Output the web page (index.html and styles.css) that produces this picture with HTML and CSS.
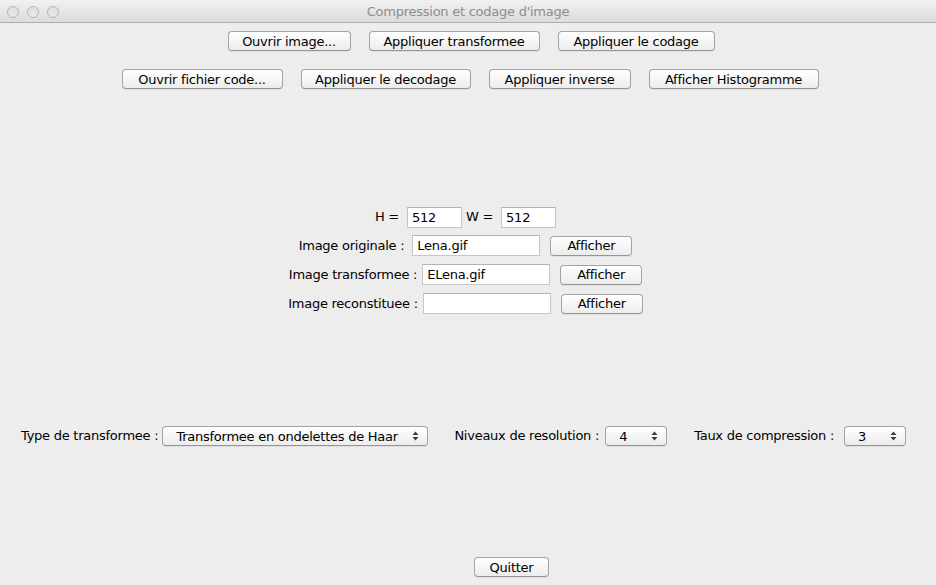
FILE: index.html
```html
<!DOCTYPE html>
<html lang="fr">
<head>
<meta charset="utf-8">
<title>Compression et codage d'image</title>
<link rel="stylesheet" href="styles.css">
</head>
<body>
<div class="window">
  <div class="titlebar">
    <div class="lights"><span class="light"></span><span class="light"></span><span class="light"></span></div>
    <div class="title">Compression et codage d'image</div>
    <div></div>
  </div>
  <div class="content">
    <div class="toolbar toolbar-one">
      <button class="btn w-ouvrir">Ouvrir image...</button>
      <button class="btn w-transf">Appliquer transformee</button>
      <button class="btn w-codage">Appliquer le codage</button>
    </div>
    <div class="toolbar toolbar-two">
      <button class="btn w-fichier">Ouvrir fichier code...</button>
      <button class="btn w-decodage">Appliquer le decodage</button>
      <button class="btn w-inverse">Appliquer inverse</button>
      <button class="btn w-histo">Afficher Histogramme</button>
    </div>

    <div class="center">
      <div class="line dims">
        <span class="lbl">H =</span>
        <span class="field small">512</span>
        <span class="lbl w-lbl">W =</span>
        <span class="field small w-field">512</span>
      </div>
      <div class="line">
        <span class="lbl">Image originale :</span>
        <span class="field wide gap-a">Lena.gif</span>
        <button class="btn afficher">Afficher</button>
      </div>
      <div class="line">
        <span class="lbl">Image transformee :</span>
        <span class="field wide gap-b">ELena.gif</span>
        <button class="btn afficher">Afficher</button>
      </div>
      <div class="line">
        <span class="lbl">Image reconstituee :</span>
        <span class="field wide gap-b"></span>
        <button class="btn afficher">Afficher</button>
      </div>
    </div>

    <div class="options">
      <span class="lbl">Type de transformee :</span>
      <div class="popup popup-type">
        <span class="popup-value">Transformee en ondelettes de Haar</span>
        <svg class="arrows" width="7" height="10" viewBox="0 0 7 10"><path d="M3.5 0.5 L6.5 4 L0.5 4 Z M0.5 6 L6.5 6 L3.5 9.5 Z" fill="#3a3a3a"/></svg>
      </div>
      <span class="lbl opt-gap niveaux">Niveaux de resolution :</span>
      <div class="popup popup-small">
        <span class="popup-value">4</span>
        <svg class="arrows" width="7" height="10" viewBox="0 0 7 10"><path d="M3.5 0.5 L6.5 4 L0.5 4 Z M0.5 6 L6.5 6 L3.5 9.5 Z" fill="#3a3a3a"/></svg>
      </div>
      <span class="lbl opt-gap">Taux de compression :</span>
      <div class="popup popup-small popup-taux">
        <span class="popup-value">3</span>
        <svg class="arrows" width="7" height="10" viewBox="0 0 7 10"><path d="M3.5 0.5 L6.5 4 L0.5 4 Z M0.5 6 L6.5 6 L3.5 9.5 Z" fill="#3a3a3a"/></svg>
      </div>
    </div>

    <div class="footer">
      <button class="btn w-quitter">Quitter</button>
    </div>
  </div>
</div>
</body>
</html>
```
FILE: styles.css
```css
* { box-sizing: border-box; }

html, body {
  margin: 0;
  padding: 0;
  background: #ededed;
}

body {
  font-family: "DejaVu Sans", "Noto Sans", sans-serif;
  font-size: 13px;
  letter-spacing: -0.25px;
  color: #000;
}

.window {
  width: 936px;
  height: 585px;
  display: flex;
  flex-direction: column;
  background: #ededed;
}

.titlebar {
  height: 23px;
  display: grid;
  grid-template-columns: 1fr auto 1fr;
  align-items: center;
  background: linear-gradient(#f1f1f1, #e4e4e4 60%, #dcdcdc);
  border-bottom: 1px solid #aeaeae;
}

.lights {
  display: flex;
  gap: 8px;
  padding-left: 7px;
  padding-top: 1px;
}

.light {
  width: 12px;
  height: 12px;
  border-radius: 50%;
  border: 1px solid #b4b4b4;
  background: linear-gradient(#dedede, #eaeaea);
}

.title {
  color: #8d8d8d;
  font-size: 13px;
  padding-top: 1px;
}

.content {
  display: flex;
  flex-direction: column;
}

.toolbar {
  display: flex;
  justify-content: center;
  gap: 18px;
}

.toolbar-one {
  margin-top: 8px;
  padding-left: 6px;
}

.toolbar-two {
  margin-top: 18px;
  padding-left: 4px;
}

.btn {
  height: 20px;
  padding: 0;
  font: inherit;
  letter-spacing: inherit;
  color: #000;
  border: 1px solid #a3a3a3;
  border-bottom-color: #959595;
  border-radius: 4px;
  background: linear-gradient(#ffffff, #f6f6f6 50%, #ececec);
  box-shadow: 0 1px 0 rgba(0, 0, 0, 0.06);
  text-align: center;
  line-height: 17px;
}

.w-ouvrir { width: 123px; }
.w-transf { width: 171px; }
.w-codage { width: 157px; }
.w-fichier { width: 161px; }
.w-decodage { width: 170px; }
.w-inverse { width: 142px; }
.w-histo { width: 170px; }
.w-quitter { width: 75px; }
.afficher { width: 82px; margin-left: 10px; }

.center {
  margin-top: 118px;
  display: flex;
  flex-direction: column;
  gap: 8px;
  padding-right: 5px;
}

.line {
  display: flex;
  justify-content: center;
  align-items: center;
  height: 21px;
}

.dims { height: 20px; }

.lbl {
  white-space: nowrap;
  line-height: 16px;
}

.field {
  height: 21px;
  background: #fff;
  border: 1px solid #c6c6c6;
  border-top-color: #b3b3b3;
  padding: 0 4px;
  line-height: 19px;
  white-space: nowrap;
}

.field.small {
  width: 55px;
  margin-left: 8px;
}

.w-lbl { margin-left: 4px; }
.field.w-field { margin-left: 8px; }

.field.wide { width: 128px; }
.gap-a { margin-left: 8px; }
.gap-b { margin-left: 5px; }

.options {
  margin-top: 112px;
  display: flex;
  align-items: center;
  padding-left: 21px;
  height: 20px;
}

.opt-gap { margin-left: 27px; }
.opt-gap.niveaux { margin-left: 26px; }

.popup {
  height: 20px;
  margin-left: 4px;
  display: flex;
  align-items: center;
  justify-content: space-between;
  border: 1px solid #a3a3a3;
  border-bottom-color: #959595;
  border-radius: 4px;
  background: linear-gradient(#ffffff, #f6f6f6 50%, #ececec);
  box-shadow: 0 1px 0 rgba(0, 0, 0, 0.06);
  padding: 0 8px 0 13px;
}

.popup-type { width: 266px; }
.popup-small { width: 62px; margin-left: 6px; }
.popup-taux { margin-left: 10px; }

.popup-value {
  white-space: nowrap;
  line-height: 17px;
}

.arrows { flex: none; }

.footer {
  margin-top: 111px;
  display: flex;
  justify-content: center;
  padding-left: 87px;
}
```
